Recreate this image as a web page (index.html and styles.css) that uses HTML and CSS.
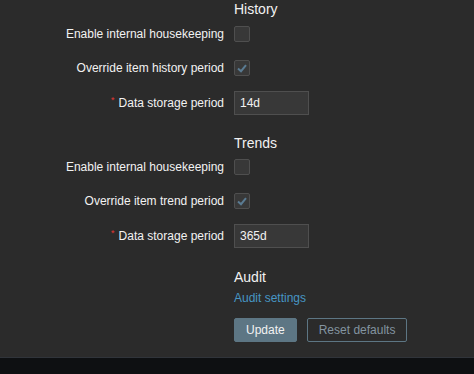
FILE: index.html
```html
<!DOCTYPE html>
<html lang="en">
<head>
    <meta charset="UTF-8">
    <title>Housekeeping</title>
    <link rel="stylesheet" href="styles.css">
</head>
<body>
    <div class="content">
        <form class="form">
            <div class="section-title first">History</div>
            <div class="form-row">
                <label class="form-label">Enable internal housekeeping</label>
                <div class="form-field"><span class="checkbox"></span></div>
            </div>
            <div class="form-row">
                <label class="form-label">Override item history period</label>
                <div class="form-field">
                    <span class="checkbox checked">
                        <svg width="14" height="14" viewBox="0 0 14 14"><polyline points="3,7.5 6,10.2 11,4.2" fill="none" stroke="#5a7b92" stroke-width="2"/></svg>
                    </span>
                </div>
            </div>
            <div class="form-row input-row">
                <label class="form-label"><span class="asterisk">*</span>Data storage period</label>
                <div class="form-field"><input class="text-input" type="text" value="14d"></div>
            </div>

            <div class="section-title">Trends</div>
            <div class="form-row">
                <label class="form-label">Enable internal housekeeping</label>
                <div class="form-field"><span class="checkbox"></span></div>
            </div>
            <div class="form-row">
                <label class="form-label">Override item trend period</label>
                <div class="form-field">
                    <span class="checkbox checked">
                        <svg width="14" height="14" viewBox="0 0 14 14"><polyline points="3,7.5 6,10.2 11,4.2" fill="none" stroke="#5a7b92" stroke-width="2"/></svg>
                    </span>
                </div>
            </div>
            <div class="form-row input-row">
                <label class="form-label"><span class="asterisk">*</span>Data storage period</label>
                <div class="form-field"><input class="text-input" type="text" value="365d"></div>
            </div>

            <div class="section-title audit">Audit</div>
            <div class="form-row link-row">
                <div class="form-label"></div>
                <div class="form-field"><a class="link" href="#">Audit settings</a></div>
            </div>
            <div class="form-row buttons-row">
                <div class="form-label"></div>
                <div class="form-field buttons">
                    <button type="button" class="btn btn-main">Update</button>
                    <button type="button" class="btn btn-alt">Reset defaults</button>
                </div>
            </div>
        </form>
    </div>
    <footer class="footer"></footer>
</body>
</html>
```

FILE: styles.css
```css
html, body {
    margin: 0;
    height: 100%;
}
body {
    font-family: "Liberation Sans", Arial, sans-serif;
    font-size: 12px;
    color: #f2f2f2;
    background-color: #2b2b2b;
    display: flex;
    flex-direction: column;
    overflow: hidden;
}
.content {
    height: 357px;
    flex-shrink: 0;
}
.form {
    margin: 0;
}
.section-title {
    font-size: 14px;
    line-height: 18px;
    padding: 9px 0 3px 234px;
    color: #f2f2f2;
}
.section-title.first {
    padding-top: 0;
    padding-bottom: 4px;
}
.section-title.audit {
    padding-top: 10px;
    padding-bottom: 2px;
}
.form-row {
    display: flex;
    align-items: center;
    min-height: 24px;
    margin-bottom: 10px;
}
.input-row {
    margin-top: 11px;
}
.form-label {
    width: 224px;
    padding-right: 10px;
    text-align: right;
    flex-shrink: 0;
}
.form-field {
    display: flex;
    align-items: center;
}
.asterisk {
    color: #e33734;
    font-size: 9px;
    vertical-align: top;
    margin-right: 4px;
    position: relative;
    top: -1px;
}
.checkbox {
    box-sizing: border-box;
    width: 16px;
    height: 16px;
    background-color: #383838;
    border: 1px solid #4f4f4f;
    border-radius: 2px;
    display: flex;
    align-items: center;
    justify-content: center;
}
.text-input {
    box-sizing: border-box;
    width: 75px;
    height: 24px;
    padding: 0 5px;
    background-color: #383838;
    border: 1px solid #4f4f4f;
    color: #f2f2f2;
    font-family: inherit;
    font-size: 12px;
    outline: none;
}
.link-row {
    min-height: 18px;
    margin-top: 1px;
}
.link {
    color: #4796c4;
    text-decoration: none;
    line-height: 18px;
}
.buttons-row {
    margin-top: 11px;
}
.buttons {
    gap: 10px;
}
.btn {
    height: 24px;
    padding: 0 11px;
    font-family: inherit;
    font-size: 12px;
    border-radius: 2px;
    cursor: pointer;
}
.btn-main {
    background-color: #5d7684;
    border: 1px solid #5d7684;
    color: #f2f2f2;
}
.btn-alt {
    background-color: transparent;
    border: 1px solid #5d7684;
    color: #8394a0;
}
.footer {
    flex: 1;
    background-color: #0e1012;
    border-top: 1px solid #30343a;
}
```
